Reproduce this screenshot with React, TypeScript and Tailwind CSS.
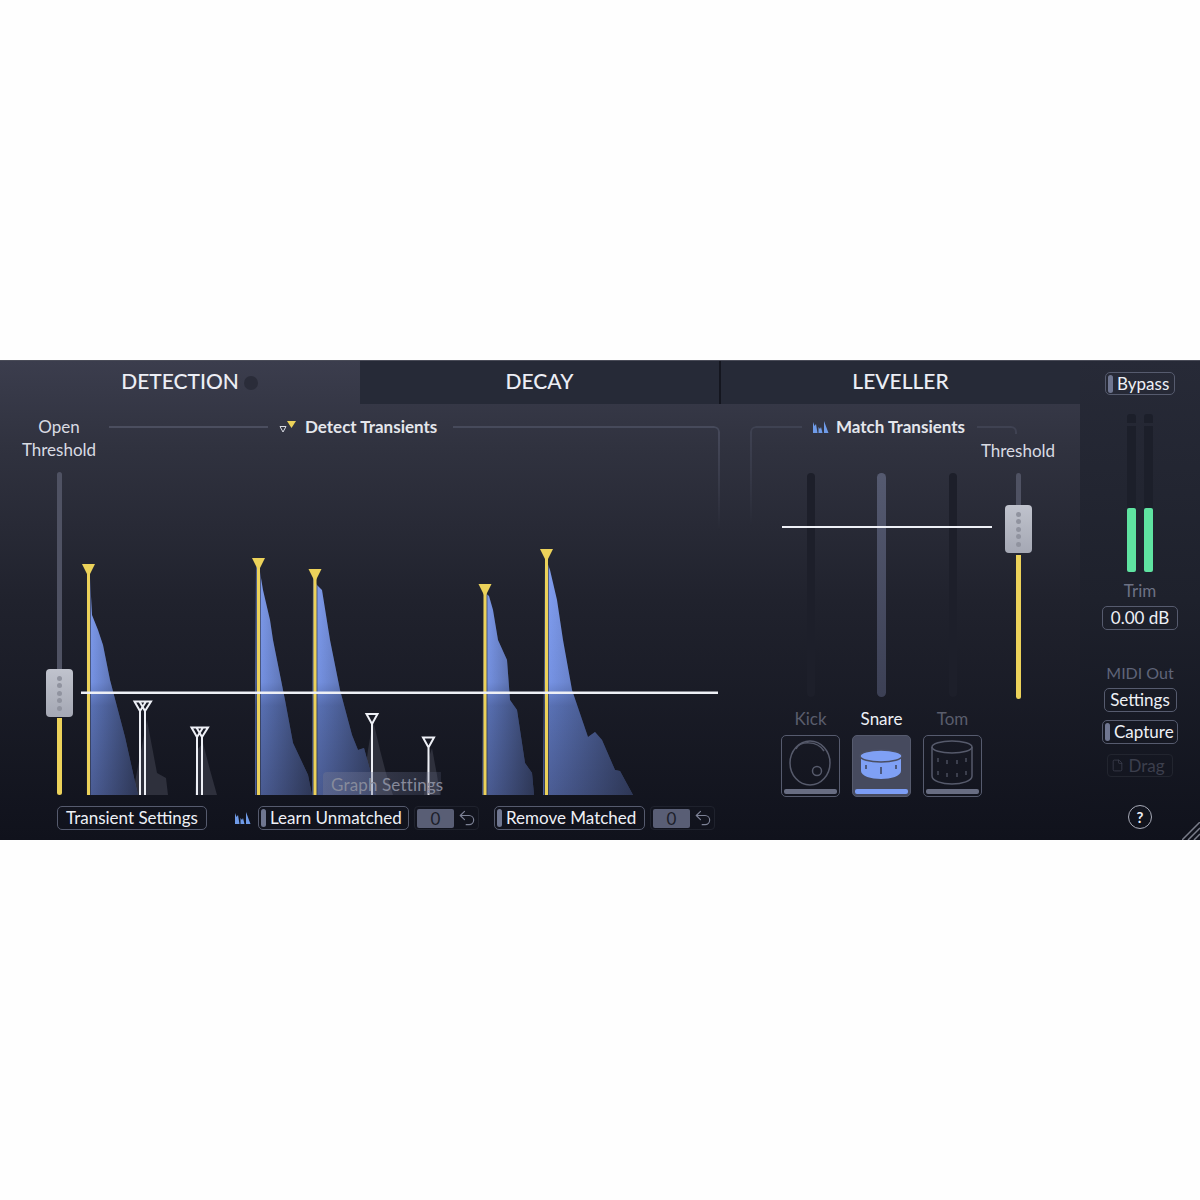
import { File, Undo2 } from "lucide-react";

const font = { fontFamily: "Lato, 'Noto Sans', sans-serif" };

const waves = [
  "87,795 88,572 90,578 92,615 98,630 103,645 110,680 125,737 135,782 138,795",
  "255,795 256,566 260,572 263,590 270,620 273,640 285,700 293,743 308,775 312,795",
  "312,795 313,578 317,585 322,590 330,640 340,690 352,735 358,750 364,748 370,770 376,795",
  "482,795 484,592 489,596 493,610 498,640 507,660 510,700 517,710 525,763 532,773 534,795",
  "543,795 545,556 550,570 557,600 563,640 572,690 588,737 595,732 602,740 615,770 620,771 633,795",
];

const ghosts = [
  "135,795 135,782 147,720 157,773 166,778 168,795",
  "195,795 197,750 203,743 210,770 217,795",
  "362,795 368,750 373,720 380,750 386,773 393,795",
  "424,795 428,760 432,748 437,775 440,795",
];

const yellowMarks = [
  { x: 88.5, y: 564 },
  { x: 258.5, y: 558 },
  { x: 315, y: 569 },
  { x: 485, y: 584 },
  { x: 546.5, y: 549 },
];

function PeaksIcon() {
  return (
    <svg width="16" height="12" viewBox="0 0 16 12" className="shrink-0">
      <path d="M0 12V1L1.500 5L3 3L4.500 12Z M5.500 12V6L7 8L8 6L9.500 12Z M11 12V0L15.500 12Z" fill="#6f9be8" />
    </svg>
  );
}

function Graph() {
  return (
    <svg viewBox="81 548 640 248" className="absolute left-[81px] top-[144px] w-[640px] h-[248px]">
      <defs>
        <linearGradient id="waveV" gradientUnits="userSpaceOnUse" x1="0" y1="560" x2="0" y2="795">
          <stop offset="0" stopColor="#86a4f8" />
          <stop offset="0.52" stopColor="#7a98ec" />
          <stop offset="0.62" stopColor="#5c75bb" />
          <stop offset="1" stopColor="#4d5f98" />
        </linearGradient>
        <linearGradient id="waveFade" x1="0" y1="0" x2="1" y2="0">
          <stop offset="0" stopColor="#14161f" stopOpacity="0" />
          <stop offset="1" stopColor="#14161f" stopOpacity="0.55" />
        </linearGradient>
      </defs>
      {ghosts.map((p) => (
        <polygon key={p} points={p} fill="#2e303c" />
      ))}
      {waves.map((p) => (
        <g key={p}>
          <polygon points={p} fill="url(#waveV)" />
          <polygon points={p} fill="url(#waveFade)" />
        </g>
      ))}
      {yellowMarks.map((m) => (
        <g key={m.x}>
          <rect x={m.x - 2.5} y={m.y + 8} width="5" height={795 - m.y - 8} fill="#23252f" opacity="0.55" />
          <rect x={m.x - 1.5} y={m.y + 8} width="3" height={795 - m.y - 8} fill="#ecd25a" />
          <polygon points={`${m.x - 6.5},${m.y} ${m.x + 6.5},${m.y} ${m.x},${m.y + 13}`} fill="#ecd25a" />
        </g>
      ))}
      <g stroke="#eef0f6" strokeWidth="2" fill="none">
        <path d="M140 711V795M145 711V795M134.500 701.500H146L140 711ZM139.500 701.500H151L145 711Z" />
        <path d="M197 737V795M202 737V795M191.500 727.500H203L197 737ZM196.500 727.500H208L202 737Z" />
        <path d="M372 724V795M366.500 714H377.500L372 724Z" />
        <path d="M428.500 748V795M423 737.500H434L428.500 747.500Z" />
      </g>
      <rect x="81" y="691.500" width="637" height="2.500" fill="#eef0f6" />
    </svg>
  );
}

function Handle() {
  return (
    <div className="w-[27px] h-[48px] shrink-0 rounded-[4px] bg-gradient-to-b from-[#c0c3cd] to-[#a5a8b4] flex flex-col items-center justify-center gap-[2.5px]">
      <span className="w-[5px] h-[5px] rounded-full bg-[#90939f]" />
      <span className="w-[5px] h-[5px] rounded-full bg-[#90939f]" />
      <span className="w-[5px] h-[5px] rounded-full bg-[#90939f]" />
      <span className="w-[5px] h-[5px] rounded-full bg-[#90939f]" />
      <span className="w-[5px] h-[5px] rounded-full bg-[#90939f]" />
    </div>
  );
}

function ToggleButton({ label, className }: { label: string; className: string }) {
  return (
    <div className={`flex items-center gap-[4px] pl-[2px] border border-[#565b6e] rounded-[5px] text-[#eef0f6] text-[17px] ${className}`}>
      <span className="w-[5px] h-[18px] rounded-[3px] bg-[#6f7690] shrink-0" />
      <span className="whitespace-nowrap">{label}</span>
    </div>
  );
}

function Counter() {
  return (
    <div className="w-[65px] h-[24px] flex items-center gap-[3px] pl-[2px] rounded-[4px] border border-[#1f222d]">
      <div className="w-[37px] h-[19px] rounded-[2px] bg-[#595e75] text-[#1c1e2a] text-[17px] leading-[19px] text-center">0</div>
      <Undo2 size={20} strokeWidth={1.4} className="text-[#7d8296]" />
    </div>
  );
}

function DetectPanel() {
  return (
    <div className="relative w-[735px] shrink-0">
      <div className="h-[391px] flex">
        <div className="w-[118px] shrink-0 flex flex-col items-center pt-[11px]">
          <div className="text-[17px] leading-[23px] text-[#d9dbe3] text-center">
            Open
            <br />
            Threshold
          </div>
          <div className="mt-[11px] flex flex-col items-center flex-1">
            <div className="w-[5px] flex-1 rounded-t-full bg-[#4f5263]" />
            <Handle />
            <div className="mt-[1px] w-[5px] h-[77px] rounded-b-full bg-[#ecd25a]" />
          </div>
        </div>
        <div className="flex-1 h-[24px] mt-[11px] flex items-start">
          <div className="w-[159px] h-[2px] mt-[11px] ml-[-9px] bg-[#4b4e5f]" />
          <svg width="18" height="14" viewBox="0 0 18 14" className="ml-[11px] mt-[5px] shrink-0">
            <path d="M1 6.500H7L4 12Z" fill="none" stroke="#d9dbe3" strokeWidth="1" />
            <path d="M8 1H17L12.500 8Z" fill="#ecd25a" />
          </svg>
          <span className="ml-[8px] text-[17px] leading-[24px] font-bold text-[#e4e6ec] whitespace-nowrap">Detect Transients</span>
          <div className="ml-[16px] w-[267px] h-[104px] mt-[11px] shrink-0 border-t-2 border-r-2 border-[#474a5b] rounded-tr-[6px] [mask-image:linear-gradient(to_bottom,black,transparent)]" />
        </div>
      </div>
      <div className="mt-[11px] h-[24px] flex items-center">
        <div className="ml-[57px] w-[150px] h-[24px] flex items-center justify-center border border-[#565b6e] rounded-[5px] text-[#eef0f6] text-[17px] whitespace-nowrap">
          Transient Settings
        </div>
        <div className="ml-[28px]">
          <PeaksIcon />
        </div>
        <ToggleButton label="Learn Unmatched" className="ml-[7px] w-[151px] h-[24px]" />
        <div className="ml-[5px]">
          <Counter />
        </div>
        <ToggleButton label="Remove Matched" className="ml-[15px] w-[151px] h-[24px]" />
        <div className="ml-[5px]">
          <Counter />
        </div>
      </div>
      <Graph />
      <div className="absolute left-[323px] top-[368px] w-[118px] h-[23px] pl-[8px] rounded-tl-[4px] bg-gradient-to-r from-[#6a7190]/50 to-[#6a7190]/20 text-[#868a9b] text-[17px] leading-[26px] tracking-[0.15px] whitespace-nowrap">
        Graph Settings
      </div>
    </div>
  );
}

function KickDrum() {
  return (
    <svg width="56" height="50" viewBox="0 0 56 50" fill="none" stroke="#565a6b" strokeWidth="1.500">
      <path d="M13 11C16 3 34 2 41 13" />
      <ellipse cx="27" cy="25" rx="20" ry="22" />
      <circle cx="34" cy="33" r="4.500" />
    </svg>
  );
}

function SnareDrum() {
  return (
    <svg width="56" height="50" viewBox="0 0 56 50" fill="none">
      <path d="M7 20V33C7 38 17 41 27 41C37 41 47 38 47 33V20Z" fill="#7fa0f5" />
      <ellipse cx="27" cy="18" rx="21" ry="6" fill="#7fa0f5" stroke="#4a4e62" strokeWidth="1.500" />
      <path d="M12 27V31M27 29V36M42 27V31" stroke="#3c4158" strokeWidth="1.500" />
    </svg>
  );
}

function TomDrum() {
  return (
    <svg width="56" height="50" viewBox="0 0 56 50" fill="none" stroke="#565a6b" strokeWidth="1.500">
      <ellipse cx="27" cy="9" rx="20" ry="6" />
      <path d="M7 9V38C7 43 17 46 27 46C37 46 47 43 47 38V9" />
      <path d="M13 20V24M22 22V26M32 22V26M41 20V24M13 33V37M22 35V39M32 35V39M41 33V37" strokeWidth="1.200" />
    </svg>
  );
}

function DrumCard({ label, active, children }: { label: string; active?: boolean; children: React.ReactNode }) {
  return (
    <div className="w-[71px] flex flex-col items-center">
      <div className={`mt-[-1px] text-[17px] leading-[23px] ${active ? "text-[#eef0f6]" : "text-[#5a5d6c]"}`}>{label}</div>
      <div className={`mt-[5px] w-[59px] h-[62px] rounded-[5px] border border-[#565b6e] p-[2px] flex flex-col items-center justify-between ${active ? "bg-[#464a5e]" : ""}`}>
        {children}
        <div className={`w-full h-[5px] rounded-[2px] ${active ? "bg-[#7c9df5]" : "bg-[#686d82]"}`} />
      </div>
    </div>
  );
}

function MatchPanel() {
  return (
    <div className="relative flex-1 pt-[11px] flex flex-col">
      <div className="h-[24px] ml-[15px] flex items-start">
        <div className="w-[52px] h-[100px] mt-[11px] border-t-2 border-l-2 border-[#3f4252] rounded-tl-[6px] [mask-image:linear-gradient(to_bottom,black,transparent)]" />
        <div className="ml-[11px] mt-[6px]">
          <PeaksIcon />
        </div>
        <span className="ml-[7px] text-[17px] leading-[24px] font-bold text-[#e4e6ec] whitespace-nowrap">Match Transients</span>
        <div className="ml-[12px] w-[40px] h-[8px] mt-[11px] border-t-2 border-r-2 border-[#3f4252] rounded-tr-[6px]" />
      </div>
      <div className="h-[23px] ml-[253px] w-[60px] flex justify-center text-[17px] leading-[23px] text-[#d9dbe3] whitespace-nowrap">Threshold</div>
      <div className="mt-[11px] h-[226px] ml-[40px] flex">
        <div className="w-[71px] flex justify-center">
          <div className="w-[8px] h-[224px] rounded-full bg-[#1d1f2a]" />
        </div>
        <div className="w-[71px] flex justify-center">
          <div className="w-[9px] h-[224px] rounded-full bg-gradient-to-b from-[#555a70] to-[#3c4055]" />
        </div>
        <div className="w-[71px] flex justify-center">
          <div className="w-[8px] h-[224px] rounded-full bg-[#1d1f2a]" />
        </div>
        <div className="w-[60px] flex flex-col items-center">
          <div className="w-[5px] h-[32px] rounded-t-full bg-[#4f5263]" />
          <Handle />
          <div className="mt-[2px] w-[5px] h-[144px] rounded-b-full bg-[#ecd25a]" />
        </div>
      </div>
      <div className="mt-[9px] ml-[40px] flex">
        <DrumCard label="Kick">
          <KickDrum />
        </DrumCard>
        <DrumCard label="Snare" active>
          <SnareDrum />
        </DrumCard>
        <DrumCard label="Tom">
          <TomDrum />
        </DrumCard>
      </div>
      <div className="absolute left-[47px] top-[122px] w-[210px] h-[2px] bg-[#eef0f6]" />
    </div>
  );
}

function SideBar() {
  return (
    <div className="relative w-[120px] shrink-0 flex flex-col items-center bg-gradient-to-b from-[#272a37] via-[#1e212c] to-[#10121c]">
      <ToggleButton label="Bypass" className="mt-[11px] w-[70px] h-[23px]" />
      <div className="mt-[19px] flex gap-[8px]">
        {[0, 1].map((i) => (
          <div key={i} className="w-[9px] flex flex-col gap-[3px]">
            <div className="h-[9px] rounded-t-[3px] bg-[#1c1f2a]" />
            <div className="h-[146px] flex flex-col justify-end bg-[#1c1f2a]">
              <div className="h-[64px] rounded-[2px] bg-[#5fe3a1]" />
            </div>
          </div>
        ))}
      </div>
      <div className="mt-[7px] text-[17px] leading-[23px] text-[#6c7184]">Trim</div>
      <div className="mt-[4px] w-[76px] h-[24px] flex items-center justify-center border border-[#565b6e] rounded-[5px] text-[#eef0f6] text-[17px]">0.00 dB</div>
      <div className="mt-[31px] text-[16px] leading-[23px] text-[#5f6479]">MIDI Out</div>
      <div className="mt-[4px] w-[73px] h-[24px] flex items-center justify-center border border-[#565b6e] rounded-[5px] text-[#eef0f6] text-[17px]">Settings</div>
      <ToggleButton label="Capture" className="mt-[8px] w-[76px] h-[24px]" />
      <div className="mt-[10px] w-[66px] h-[23px] flex items-center justify-center gap-[4px] pr-[4px] border border-[#22252f] rounded-[4px] text-[#3c3f4d] text-[17px]">
        <File size={13} strokeWidth={1.5} />
        Drag
      </div>
      <div className="mt-[28px] w-[24px] h-[24px] rounded-full border border-[#a8abb8] flex items-center justify-center text-[#eef0f6] text-[15px] font-bold">?</div>
      <svg width="18" height="18" viewBox="0 0 18 18" className="absolute right-0 bottom-0" stroke="#7a7d8a" strokeWidth="1.500">
        <path d="M0 18L18 0M6 18L18 6M12 18L18 12" />
      </svg>
    </div>
  );
}

export default function App() {
  return (
    <div className="h-[1200px] w-[1200px] bg-[#fefefe] flex items-center" style={font}>
      <div className="w-full h-[480px] flex border-t border-[#4a4c58]">
        <div className="w-[1080px] flex flex-col bg-[linear-gradient(to_bottom,#3b3d4d_0%,#30323f_18%,#20222d_50%,#10121c_100%)]">
          <div className="h-[43px] flex">
            <div className="relative w-[360px] pb-[4px] flex items-center justify-center text-[21px] font-medium text-[#eceef5]">
              DETECTION
              <span className="absolute left-[244px] top-[15px] w-[14px] h-[14px] rounded-full bg-[#2a2c39]" />
            </div>
            <div className="w-[359px] pb-[4px] flex items-center justify-center bg-[#262a37] text-[21px] font-medium text-[#eceef5]">DECAY</div>
            <div className="w-[2px] bg-[#14161f]" />
            <div className="w-[359px] pb-[4px] flex items-center justify-center bg-[#262a37] text-[21px] font-medium text-[#eceef5]">LEVELLER</div>
          </div>
          <div className="flex-1 flex">
            <DetectPanel />
            <MatchPanel />
          </div>
        </div>
        <SideBar />
      </div>
    </div>
  );
}
